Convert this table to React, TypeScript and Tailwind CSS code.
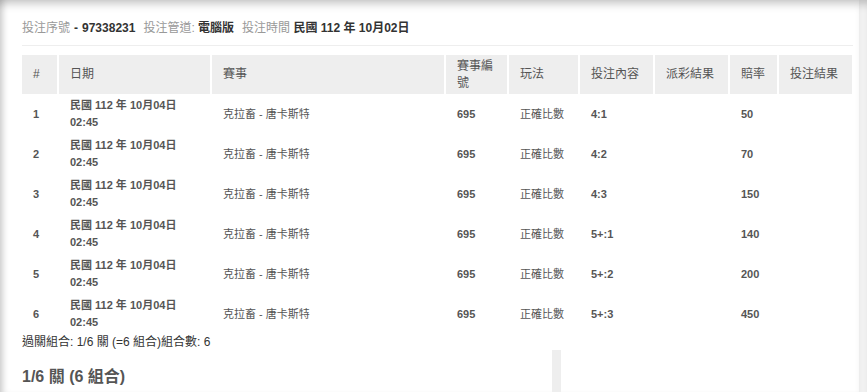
import React from 'react';

const rows = [
  { no: 1, pick: '4:1', odds: '50' },
  { no: 2, pick: '4:2', odds: '70' },
  { no: 3, pick: '4:3', odds: '150' },
  { no: 4, pick: '5+:1', odds: '140' },
  { no: 5, pick: '5+:2', odds: '200' },
  { no: 6, pick: '5+:3', odds: '450' },
];

const headers = ['#', '日期', '賽事', '賽事編號', '玩法', '投注內容', '派彩結果', '賠率', '投注結果'];
const widths = ['w-[35px]', 'w-[153px]', 'w-[234px]', 'w-[63px]', 'w-[71px]', 'w-[75px]', 'w-[75px]', 'w-[49px]', 'w-[75px]'];

export default function App() {
  return (
    <div
      className="flex h-[392px] w-[867px] overflow-hidden bg-white text-[#333]"
      style={{ fontFamily: '"Liberation Sans", Arial, "Noto Sans CJK TC", sans-serif' }}
    >
      <div className="flex-1 bg-white pl-[22px] pr-[6px] pt-[19px] shadow-[inset_7px_0_6px_-4px_rgba(0,0,0,0.18),inset_0_9px_8px_-5px_rgba(0,0,0,0.22)]">
        {/* bet info */}
        <div className="flex items-center gap-[8px] pb-[8px] text-[12px] leading-[18px]">
          <span>
            <span className="text-[#999]">投注序號</span>
            <span className="px-[4px] font-bold text-[#333]">-</span>
            <span className="font-bold text-[#333]">97338231</span>
          </span>
          <span>
            <span className="text-[#999]">投注管道: </span>
            <span className="font-bold text-[#333]">電腦版</span>
          </span>
          <span>
            <span className="text-[#999]">投注時間 </span>
            <span className="font-bold text-[#333]">民國 112 年 10月02日</span>
          </span>
        </div>
        <div className="h-px w-[831px] bg-[#eee]" />

        <table className="mt-[9px] w-[830px] table-fixed border-separate border-spacing-0">
          <colgroup>
            {widths.map((w, i) => (
              <col key={i} className={w} />
            ))}
          </colgroup>
          <thead>
            <tr className="h-[39px] bg-[#eee]">
              {headers.map((h, i) => (
                <th
                  key={h}
                  className={`px-[11px] text-left align-middle text-[12px] font-normal leading-[17px] text-[#555] ${
                    i > 0 ? 'border-l-2 border-white' : ''
                  }`}
                >
                  {h}
                </th>
              ))}
            </tr>
          </thead>
          <tbody className="text-[11px] leading-[17px] text-[#555]">
            {rows.map((r) => (
              <tr key={r.no} className="h-[40px]">
                <td className="pl-[11px] align-middle font-bold">{r.no}</td>
                <td className="pl-[13px] align-middle font-bold">
                  民國 112 年 10月04日
                  <br />
                  02:45
                </td>
                <td className="pl-[13px] align-middle">克拉畜 - 唐卡斯特</td>
                <td className="pl-[13px] align-middle font-bold">695</td>
                <td className="pl-[13px] align-middle">正確比數</td>
                <td className="pl-[13px] align-middle font-bold">{r.pick}</td>
                <td className="pl-[13px] align-middle" />
                <td className="pl-[13px] align-middle font-bold">{r.odds}</td>
                <td className="pl-[13px] align-middle" />
              </tr>
            ))}
          </tbody>
        </table>

        <div className="pt-[1px] text-[12px] leading-[14px] text-[#333]">
          過關組合: 1/6 關 (=6 組合)組合數: 6
        </div>

        <div className="mt-[1px] flex h-[60px]">
          <div className="w-[530px] pt-[17px] text-[16px] font-semibold leading-[20px] text-[#555]">
            1/6 關 (6 組合)
          </div>
          <div className="w-[9px] bg-[#eee]" />
        </div>
      </div>
      <div className="w-[8px] bg-[#f2f2f2] shadow-[inset_0_9px_8px_-5px_rgba(0,0,0,0.22)]" />
    </div>
  );
}
